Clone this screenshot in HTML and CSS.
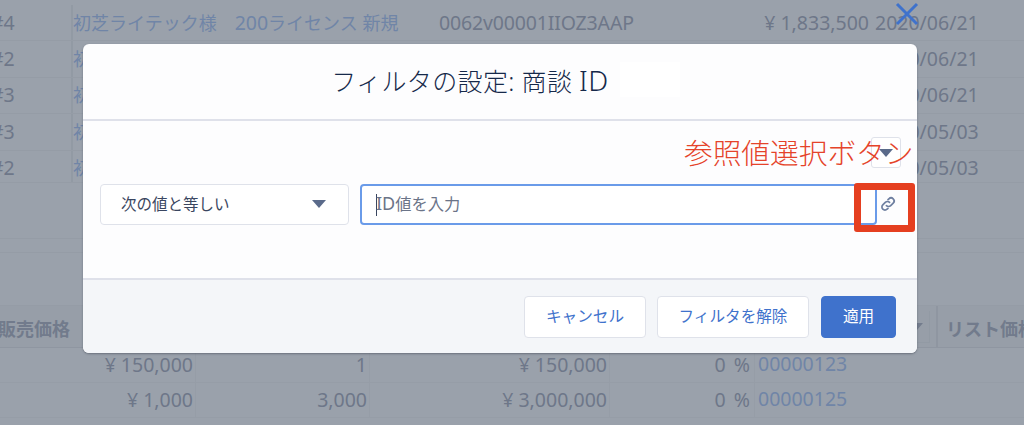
FILE: index.html
```html
<!DOCTYPE html>
<html lang="ja">
<head>
<meta charset="utf-8">
<title>フィルタの設定</title>
<link rel="stylesheet" href="styles.css">
</head>
<body>
<main class="page">
  <section class="top-table">
    <div class="row"><span class="num">#4</span><a class="name">初芝ライテック様　<span class="lat">200</span>ライセンス 新規</a><span class="oid">0062v00001IIOZ3AAP</span><span class="amt">¥ 1,833,500</span><span class="date">2020/06/21</span></div>
    <div class="row"><span class="num">#2</span><a class="name">初芝ライテック様</a><span class="oid"></span><span class="amt"></span><span class="date">2020/06/21</span></div>
    <div class="row"><span class="num">#3</span><a class="name">初芝ライテック様</a><span class="oid"></span><span class="amt"></span><span class="date">2020/06/21</span></div>
    <div class="row"><span class="num">#3</span><a class="name">初芝ライテック様</a><span class="oid"></span><span class="amt"></span><span class="date">2020/05/03</span></div>
    <div class="row"><span class="num">#2</span><a class="name">初芝ライテック様</a><span class="oid"></span><span class="amt"></span><span class="date">2020/05/03</span></div>
  </section>
  <div class="band"></div>
  <section class="bottom-table">
    <div class="head">
      <span class="h-price">販売価格</span><span class="h-mid"><span class="arrow dim"></span></span><span class="h-list">リスト価格</span>
    </div>
    <div class="line"><span class="c1">¥ 150,000</span><span class="c2">1</span><span class="c3">¥ 150,000</span><span class="c4">0 %</span><a class="c5">00000123</a></div>
    <div class="line"><span class="c1">¥ 1,000</span><span class="c2">3,000</span><span class="c3">¥ 3,000,000</span><span class="c4">0 %</span><a class="c5">00000125</a></div>
  </section>
</main>

<svg class="close" width="24" height="24" viewBox="0 0 24 24" aria-label="閉じる"><path d="M2 2 L22 22 M22 2 L2 22"/></svg>

<div class="modal">
  <header class="modal-head">
    <h1>フィルタの設定: 商談 <span class="title-id">ID</span></h1>
    <div class="mask"></div>
  </header>
  <div class="modal-body">
    <div class="menu-row"><button class="mini"><span class="arrow"></span></button></div>
    <div class="form-row">
      <div class="select"><span>次の値と等しい</span><span class="arrow"></span></div>
      <div class="input"><span class="caret"></span><span><span class="id-lat">ID</span>値を入力</span></div>
      <div class="link-btn">
        <svg width="18" height="18" viewBox="0 0 18 18"><path d="M7.4 10.600a3 3 0 0 0 4.300 0l2.500-2.500a3 3 0 0 0-4.300-4.300L9 4.700"/><path d="M10.600 7.400a3 3 0 0 0-4.300 0L3.800 9.900a3 3 0 0 0 4.300 4.300l.9-.9"/></svg>
      </div>
    </div>
    <div class="note">参照値選択ボタン</div>
    <div class="frame"></div>
  </div>
  <footer class="modal-foot">
    <button class="btn">キャンセル</button>
    <button class="btn clear">フィルタを解除</button>
    <button class="btn apply">適用</button>
  </footer>
</div>
</body>
</html>
```
FILE: styles.css
```css
* { box-sizing: border-box; }
html, body { margin: 0; height: 100%; }
body {
  background: #9aa1ab;
  font-family: "Noto Sans", "Noto Sans CJK JP", sans-serif;
  color: #6e7789;
  font-size: 16px;
  overflow: hidden;
  position: relative;
}
a { color: #7085a7; }
.page { width: 1024px; height: 425px; display: flex; flex-direction: column; }

.top-table { height: 182px; padding-top: 5px; }
.row {
  display: grid;
  grid-template-columns: 73px 366px 200px 230px 149px;
  height: 36.400px;
  align-items: center;
  border-bottom: 1px solid #959ca6;
  font-size: 19.500px;
  line-height: 24px;
  white-space: nowrap;
}
.num { border-right: 2px solid #929aa4; height: 100%; display: flex; align-items: center; text-indent: -9px; }
.name { font-size: 18px; }
.lat { font-size: 19.500px; }
.oid { letter-spacing: -.15px; }
.amt { text-align: right; }
.date { padding-left: 6px; }

.band {
  height: 123px;
  border-top: 1px solid #959ca6;
  background: linear-gradient(#9aa1ab 55px, #959ca6 55px, #959ca6 56px, #9aa1ab 56px, #9aa1ab 69px, #959ca6 69px, #959ca6 70px, #9aa1ab 70px);
}
.bottom-table { border-top: 1px solid #959ca6; }
.head {
  height: 42px;
  display: grid;
  grid-template-columns: 936px 1fr;
  align-items: center;
  background: #979ea8;
  border-bottom: 1px solid #8f96a1;
  font-weight: 700;
  font-size: 18px;
  color: #727b8c;
  white-space: nowrap;
}
.h-price { grid-column: 1; grid-row: 1; margin-left: -2px; padding-top: 2px; }
.h-mid {
  grid-column: 1; grid-row: 1;
  justify-self: end;
  width: 26px; height: 32px;
  margin-right: 6px;
  border-right: 1px solid #929aa4;
  border-bottom: 1px solid #929aa4;
  display: flex; align-items: center; justify-content: center;
}
.h-list { grid-column: 2; grid-row: 1; padding: 2px 0 0 8px; border-left: 2px solid #8f96a1; height: 100%; display: flex; align-items: center; }
.line {
  height: 35px;
  display: grid;
  grid-template-columns: 196px 174px 240px 145px 1fr;
  align-items: center;
  border-bottom: 1px solid #969da7;
  font-size: 19.500px;
  line-height: 24px;
}
.line span { text-align: right; padding-right: 2px; border-right: 1px solid #969da7; height: 100%; display: block; line-height: 33px; }
.line .c4 { padding-right: 4px; word-spacing: 3px; }
.c5 { padding: 0 0 2px 3px; }

.close { position: absolute; left: 895px; top: 2px; }
.close path { fill: none; stroke: #3f72cc; stroke-width: 3; }

.modal {
  position: absolute;
  left: 83px; top: 44px;
  width: 834px; height: 309px;
  border-radius: 6px;
  overflow: hidden;
  background: #fdfdfe;
  display: flex;
  flex-direction: column;
  box-shadow: 0 1px 2px rgba(60, 66, 80, .5);
}
.modal-head {
  height: 77px;
  border-bottom: 2px solid #dfe1ea;
  display: flex;
  align-items: center;
  justify-content: center;
  position: relative;
  padding: 0 60px 3px 0;
}
.modal-head h1 { margin: 0; font-size: 25px; font-weight: 300; letter-spacing: .35px; color: #16294a; line-height: 34px; white-space: nowrap; }
.title-id { font-size: 28px; letter-spacing: .5px; line-height: 34px; }
.mask { position: absolute; left: 537px; top: 18px; width: 60px; height: 35px; background: #fff; }

.modal-body { flex: 1; padding: 16px 16px 0 17px; position: relative; }
.menu-row { display: flex; justify-content: flex-end; }
.mini {
  width: 30px; height: 31px; padding: 0;
  background: #fff;
  border: 1px solid #dfe2ea;
  border-radius: 3px;
  display: flex; align-items: center; justify-content: center;
}
.arrow {
  display: block;
  width: 0; height: 0;
  border-left: 7px solid transparent;
  border-right: 7px solid transparent;
  border-top: 8px solid #5a6a8a;
}
.arrow.dim { border-top-color: #737c8d; border-left-width: 6px; border-right-width: 6px; border-top-width: 7px; }
.form-row { display: flex; margin-top: 16px; height: 41px; }
.select {
  width: 249px;
  background: #fff;
  border: 1px solid #dfe2ea;
  border-radius: 4px;
  display: flex; align-items: center; justify-content: space-between;
  padding: 0 22px 2px 20px;
  font-size: 15.500px;
  color: #3a4660;
}
.input {
  width: 517px;
  margin-left: 11px;
  background: #fff;
  border: 2px solid #6a9be9;
  border-radius: 4px;
  display: flex; align-items: center;
  padding: 0 0 3px 14px;
  font-size: 16.250px;
  color: #6b7488;
}
.id-lat { font-size: 18px; }
.caret { width: 1px; height: 22px; background: #3a4660; margin: 3px -1px 0 0; }
.link-btn { flex: 1; display: flex; align-items: center; padding: 0 0 2px 2px; }
.link-btn svg { display: block; }
.link-btn path { fill: none; stroke: #6e7fa0; stroke-width: 1.700; stroke-linecap: round; }

.note {
  position: absolute;
  left: 601px; top: 10px;
  font-size: 28.700px;
  font-weight: 300;
  line-height: 44px;
  color: #e5432a;
  white-space: nowrap;
}
.frame {
  position: absolute;
  left: 771px; top: 62px;
  width: 61px; height: 49px;
  border: 7px solid #e53f20;
  border-radius: 3px;
}

.modal-foot {
  height: 75px;
  border-top: 2px solid #dfe1ea;
  background: #f4f6f9;
  display: flex;
  justify-content: flex-end;
  align-items: flex-start;
  gap: 11px;
  padding: 16px 21px 0 0;
}
.btn {
  height: 42px;
  width: 122px;
  background: #fff;
  border: 1px solid #dfe2ea;
  border-radius: 4px;
  font: inherit;
  font-size: 15.600px;
  color: #3f72cc;
  padding: 0 0 4px;
}
.clear { width: 152px; }
.apply { width: 75px; background: #3f72cc; border-color: #3f72cc; color: #fff; margin-left: 1px; }
```
